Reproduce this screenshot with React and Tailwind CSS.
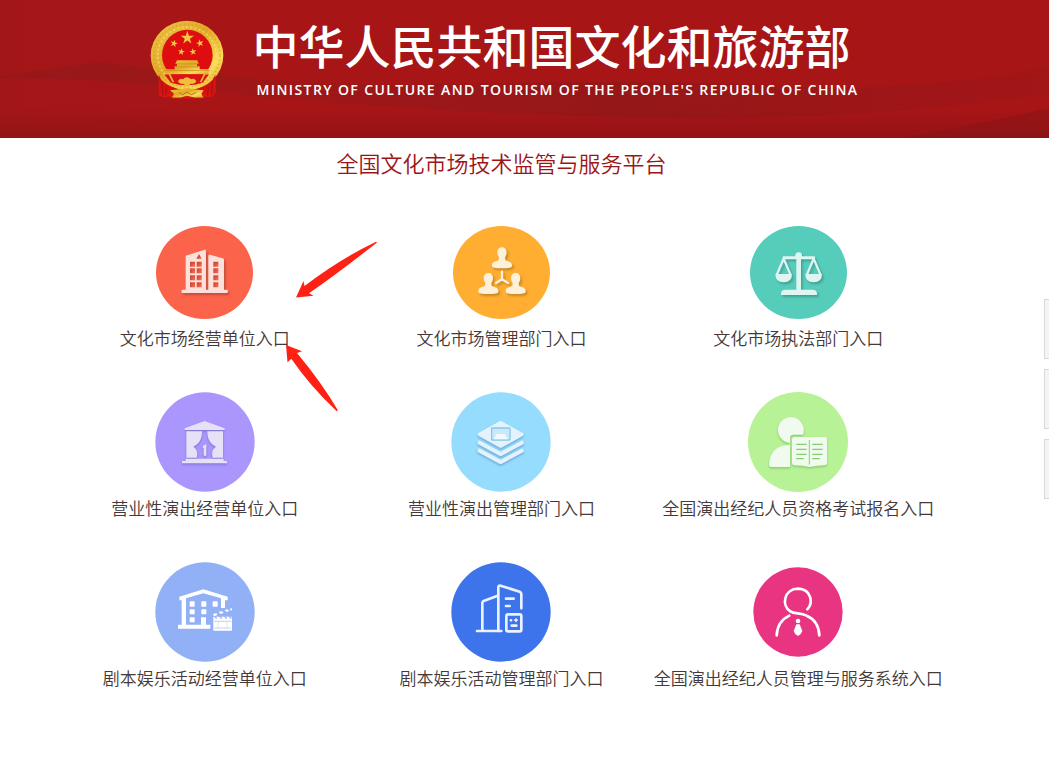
import React from "react";

const shadow = "[filter:drop-shadow(5px_6px_3px_rgba(0,0,0,0.22))]";
const softShadow = "[filter:drop-shadow(0px_4px_3px_rgba(30,60,120,0.35))]";

function Star({ cx, cy, r, turn = 0 }) {
  const points = Array.from({ length: 10 }, (_, i) => {
    const a = ((i * 36 - 90 + turn) * Math.PI) / 180;
    const d = i % 2 ? r * 0.38 : r;
    return `${(cx + d * Math.cos(a)).toFixed(1)},${(cy + d * Math.sin(a)).toFixed(1)}`;
  }).join(" ");
  return <polygon points={points} fill="#f6c544" />;
}

function Emblem() {
  return (
    <svg viewBox="58 43 222 236" className="h-[79px] w-[74px] shrink-0" aria-hidden="true">
      <defs>
        <linearGradient id="gold" x1="0" y1="0" x2="1" y2="1">
          <stop offset="0" stopColor="#edc64a" />
          <stop offset="0.45" stopColor="#e2a925" />
          <stop offset="0.75" stopColor="#fadb58" />
          <stop offset="1" stopColor="#e0a028" />
        </linearGradient>
      </defs>
      <path d="M86 200 L84 268 L100 276 L114 272 L126 278 H214 L226 272 L242 274 L256 258 L254 200 Z" fill="#dc1512" />
      <ellipse cx="169" cy="149" rx="109" ry="104" fill="url(#gold)" />
      <ellipse cx="169" cy="149" rx="99" ry="94" fill="none" stroke="#c58d1c" strokeWidth="5" strokeDasharray="5 7" opacity="0.4" />
      <ellipse cx="169" cy="149" rx="88" ry="85" fill="none" stroke="#fae47c" strokeWidth="5" strokeDasharray="7 6" opacity="0.6" />
      <ellipse cx="170" cy="148" rx="76" ry="76" fill="#de0e10" />
      <Star cx={170} cy={96} r={21} />
      <Star cx={130} cy={113} r={12} turn={15} />
      <Star cx={208} cy={112} r={12} turn={-15} />
      <Star cx={152} cy={138} r={11} turn={10} />
      <Star cx={187} cy={138} r={11} turn={-10} />
      <path d="M139 163 H200 L204 174 H199 V181 H207 V190 H237 L232 205 H106 L102 190 H132 V181 H139 V174 H134 Z" fill="url(#gold)" />
      <path d="M134 174 H204 M132 183 H207 M104 194 H236" stroke="#c78a18" strokeWidth="2" />
      <path d="M101 206 H235 L216 231 Q170 246 121 231 Z" fill="#d91512" />
      <path d="M116 205 L128 229 M222 205 L210 229" stroke="#eeb932" strokeWidth="5" />
      <path d="M142 226 Q148 216 157 220 Q168 209 181 220 Q191 216 197 226 Q193 236 181 234 Q169 243 157 234 Q146 236 142 226 Z" fill="#efbd38" />
      <path d="M84 206 Q96 240 128 244 L142 252 L134 262 Q110 262 84 262 Z M254 206 Q240 240 212 244 L198 252 L206 262 Q230 262 255 260 Z" fill="#d41212" />
      <path d="M93 226 L97 270 M106 242 V270 M245 226 L243 268 M233 242 L231 270" stroke="#a70e10" strokeWidth="3" fill="none" />
      <path d="M118 253 L150 250 L169 246 L189 250 L219 253 L212 264 L218 275 H192 L169 270 L149 275 H124 L130 264 Z" fill="url(#gold)" />
      <path d="M144 260 L156 267 L169 259 L182 267 L196 260" fill="none" stroke="#b37a17" strokeWidth="3" />
    </svg>
  );
}

function OfficeIcon() {
  return (
    <svg viewBox="48 43 291 279" className="h-[93px] w-[97px]" aria-hidden="true">
      <ellipse cx="193.500" cy="182.500" rx="145.500" ry="139.500" fill="#fb634a" />
      <g className={shadow} fill="#fde0da">
        <path fillRule="evenodd" d="M137 132 L194 114 Q198 114 198 118 V234 H205 V132 Q206 128 210 129 L248 140 Q252 141 252 145 V234 H260 Q264 234 264 239 Q264 244 260 244 H128 Q124 244 124 239 Q124 234 128 234 H137 Z M177 127 L169 141 H185 Z M150 150 h15 v15 h-15 Z M170 150 h15 v15 h-15 Z M150 170 h15 v15 h-15 Z M170 170 h15 v15 h-15 Z M150 191 h15 v15 h-15 Z M170 191 h15 v15 h-15 Z M150 212 h15 v15 h-15 Z M170 212 h15 v15 h-15 Z M220 150 h15 v15 h-15 Z M220 170 h15 v15 h-15 Z M220 191 h15 v15 h-15 Z M220 212 h15 v15 h-15 Z" />
      </g>
    </svg>
  );
}

function Bust({ x, y }) {
  return (
    <path
      transform={`translate(${x} ${y})`}
      d="M0 0 C9 0 14 6 14 15 C14 22 12 26 9 30 L10 38 C16 43 30 42 30 54 V57 Q30 63 0 63 Q-30 63 -30 57 V54 C-30 42 -16 43 -10 38 L-9 30 C-12 26 -14 22 -14 15 C-14 6 -9 0 0 0 Z"
    />
  );
}

function TeamIcon() {
  return (
    <svg viewBox="39 29 291 279" className="h-[93px] w-[97px]" aria-hidden="true">
      <ellipse cx="184.500" cy="168.500" rx="145.500" ry="139.500" fill="#ffae31" />
      <g className={shadow} fill="#fff0d9">
        <Bust x={186} y={93} />
        <Bust x={145} y={170} />
        <Bust x={227} y={170} />
        <path d="M186 166 V189 M186 189 L168 200 M186 189 L204 200" fill="none" stroke="#fff0d9" strokeWidth="7" strokeLinecap="round" />
      </g>
    </svg>
  );
}

function ScalesIcon() {
  return (
    <svg viewBox="27 29 291 279" className="h-[93px] w-[97px]" aria-hidden="true">
      <ellipse cx="172.500" cy="168.500" rx="145.500" ry="139.500" fill="#56cdbb" />
      <g className={shadow} fill="#def5f1">
        <circle cx="173" cy="118" r="10" />
        <rect x="166" y="118" width="14" height="106" />
        <rect x="125" y="120" width="97" height="9" rx="2" />
        <path d="M120 236 V230 Q121 220 135 220 H213 Q227 220 228 230 V236 Z" />
        <path d="M128 127 L108 174 M128 127 L148 174 M218 127 L198 174 M218 127 L238 174" stroke="#def5f1" strokeWidth="7" fill="none" />
        <path d="M103 173 H153 Q153 198 128 198 Q103 198 103 173 Z M193 173 H243 Q243 198 218 198 Q193 198 193 173 Z" />
      </g>
    </svg>
  );
}

function StageIcon() {
  return (
    <svg viewBox="30 21 300 300" className="size-[100px]" aria-hidden="true">
      <circle cx="180" cy="171" r="149" fill="#ab96fe" />
      <g className={softShadow} fill="#e7e1f8">
        <path d="M119 135 V130 L179 108 L239 130 V135 Z" />
        <path d="M124 139 H171 C171 163 162 177 145 185 C155 192 159 202 155 218 H124 Z" />
        <path d="M234 139 H187 C187 163 196 177 213 185 C203 192 199 202 203 218 H234 Z" />
        <path d="M122 221 H236 V228 H246 V235 H111 V228 H122 Z" />
        <path d="M174 183 Q178 177 184 179 V209 Q184 213 180 213 Q176 213 176 209 V188 L173 190 Z" />
      </g>
    </svg>
  );
}

function LayersIcon() {
  return (
    <svg viewBox="37 21 300 300" className="size-[100px]" aria-hidden="true">
      <circle cx="187" cy="171" r="149" fill="#95dcff" />
      <g className={softShadow} fill="#e2f3fd">
        <path d="M182 109 Q186 107 190 109 L252 143 Q259 148 252 153 L191 187 Q186 190 181 187 L120 153 Q113 148 120 143 Z" />
        <path d="M117 168 Q120 165 125 167 L186 200 L248 167 Q253 165 255 169 V177 L190 212 Q186 214 182 212 L117 177 Z" />
        <path d="M117 192 Q120 189 125 191 L186 224 L248 191 Q253 189 255 193 V201 L190 236 Q186 238 182 236 L117 201 Z" />
      </g>
      <rect x="159" y="129" width="55" height="36" rx="2" fill="#cbe8f9" stroke="#86c6ec" strokeWidth="4" />
      <path d="M172 151 Q173 147 178 147 H195 Q200 147 200 151 L208 163 H165 Z" fill="#f2fafe" />
    </svg>
  );
}

function ExamIcon() {
  return (
    <svg viewBox="24 21 300 300" className="size-[100px]" aria-hidden="true">
      <circle cx="174" cy="171" r="150" fill="#b8f297" />
      <g className="[filter:drop-shadow(0px_4px_3px_rgba(50,140,40,0.4))]" fill="#f0faee">
        <path d="M150 174 A39 39 0 1 1 189 149 H160 Q151 149 150 158 Z" />
        <path d="M150 179 V246 H94 Q87 246 87 237 Q91 180 150 179 Z" />
        <path d="M162 156 H255 Q261 157 261 163 V234 Q261 240 255 241 Q229 241 209 246 Q188 241 162 241 Q156 240 156 234 V163 Q156 157 162 156 Z" />
      </g>
      <path d="M208 165 V239" stroke="#8bd771" strokeWidth="3" />
      <path d="M169 178 H200 M169 193 H200 M169 208 H200 M169 221 H191 M217 178 H248 M217 193 H248 M217 208 H248 M217 221 H239" stroke="#84cf72" strokeWidth="4" />
    </svg>
  );
}

function ScriptVenueIcon() {
  return (
    <svg viewBox="30 21 300 300" className="size-[100px]" aria-hidden="true">
      <circle cx="180" cy="171" r="149" fill="#92b0f5" />
      <path d="M103 125 L175 103 L248 125 V136 H240 V159 H228 V130 L175 115 L123 130 V209 H168 V187 H183 V209 H196 V221 H99 V209 H110 V136 H103 Z" fill="#fff" />
      <g fill="#fff">
        <rect x="134" y="139" width="15" height="16" rx="2" />
        <rect x="169" y="139" width="15" height="16" rx="2" />
        <rect x="203" y="139" width="15" height="16" rx="2" />
        <rect x="134" y="163" width="15" height="15" rx="2" />
        <rect x="169" y="163" width="15" height="15" rx="2" />
        <rect x="134" y="187" width="15" height="15" rx="2" />
        <rect x="205" y="185" width="56" height="42" rx="2" />
        <path d="M204 177 L214 174 L217 180 L207 184 Z M221 171 L230 168 L236 174 L226 177 Z M239 165 L247 163 L253 168 L244 171 Z M255 161 L260 159 L261 165 L257 167 Z" />
      </g>
      <path d="M209 184 L215 191 M224 184 L230 191 M239 184 L245 191 M253 184 L259 191" stroke="#92b0f5" strokeWidth="4" />
      <path d="M207 199 H259 M208 219 H258" stroke="#9db8f4" strokeWidth="2" />
      <path d="M219 199 V219 M246 199 V219" stroke="#d0ddfa" strokeWidth="2" />
    </svg>
  );
}

function ScriptOfficeIcon() {
  return (
    <svg viewBox="37 21 300 300" className="size-[100px]" aria-hidden="true">
      <circle cx="187" cy="171" r="149" fill="#3d74eb" />
      <g fill="none" stroke="#ebf1fd" strokeWidth="8" strokeLinecap="round" strokeLinejoin="round">
        <path d="M115 228 H188 M131 228 V144 Q131 140 135 138 L177 122" />
        <path d="M179 228 V97 Q179 90 186 92 L243 110 Q248 112 248 117 V160" />
        <path d="M202 131 H225 M202 153 H213" />
        <rect x="203" y="178" width="45" height="51" rx="5" />
        <path d="M219 212 H233" />
      </g>
      <circle cx="217" cy="196" r="4" fill="#ebf1fd" />
      <path d="M232 188 L235 193 L240 195 L235 198 L232 203 L229 198 L224 195 L229 193 Z" fill="#ebf1fd" />
    </svg>
  );
}

function AgentIcon() {
  return (
    <svg viewBox="39 36 270 270" className="size-[90px]" aria-hidden="true">
      <circle cx="174" cy="171" r="134" fill="#e93482" />
      <g fill="none" stroke="#fff" strokeWidth="8" strokeLinecap="round">
        <path d="M110 241 Q112 199 148 182" />
        <path d="M202 163 C220 145 215 102 174 101 C132 102 123 151 151 169 C164 178 181 172 200 182 Q236 197 238 241" />
      </g>
      <circle cx="174" cy="198" r="7" fill="#fff" />
      <path d="M169 208 H179 L187 228 Q184 239 174 243 Q164 239 161 228 Z" fill="#fff" />
    </svg>
  );
}

function Arrows() {
  return (
    <svg viewBox="57 222 340 200" className="pointer-events-none absolute top-0 left-0 h-[200px] w-[340px] max-w-none" aria-hidden="true">
      <g fill="#ff2114">
        <path d="M296 297.500 L303.500 281 L304.500 286 Q340 259 376 241.700 L377 242.500 Q341 271 309 293.300 L313.500 295.800 Z" />
        <path d="M286 345 L302 351.300 L297 353 Q322 383 338 410.500 L336.500 411 Q310 386 291.300 358.700 L287.500 362.300 Z" />
      </g>
    </svg>
  );
}

const entries = [
  { label: "文化市场经营单位入口", Icon: OfficeIcon, marked: true },
  { label: "文化市场管理部门入口", Icon: TeamIcon },
  { label: "文化市场执法部门入口", Icon: ScalesIcon },
  { label: "营业性演出经营单位入口", Icon: StageIcon },
  { label: "营业性演出管理部门入口", Icon: LayersIcon },
  { label: "全国演出经纪人员资格考试报名入口", Icon: ExamIcon },
  { label: "剧本娱乐活动经营单位入口", Icon: ScriptVenueIcon },
  { label: "剧本娱乐活动管理部门入口", Icon: ScriptOfficeIcon },
  { label: "全国演出经纪人员管理与服务系统入口", Icon: AgentIcon },
];

function Waves() {
  return (
    <svg viewBox="0 0 1049 138" preserveAspectRatio="none" className="absolute inset-0 h-full w-full" aria-hidden="true">
      <defs>
        <linearGradient id="base" x1="0" y1="0" x2="1" y2="0">
          <stop offset="0" stopColor="#a31618" />
          <stop offset="0.2" stopColor="#a81517" />
          <stop offset="1" stopColor="#a81517" />
        </linearGradient>
        <linearGradient id="fold" x1="0" y1="0" x2="1" y2="0">
          <stop offset="0" stopColor="#951819" stopOpacity="0.9" />
          <stop offset="0.25" stopColor="#9b1719" stopOpacity="0.7" />
          <stop offset="0.6" stopColor="#961718" />
          <stop offset="1" stopColor="#a31517" />
        </linearGradient>
        <linearGradient id="floor" x1="0" y1="0" x2="0" y2="1">
          <stop offset="0" stopColor="#8c1214" stopOpacity="0" />
          <stop offset="1" stopColor="#861214" stopOpacity="0.6" />
        </linearGradient>
      </defs>
      <rect width="1049" height="138" fill="url(#base)" />
      <path d="M0 76 Q55 68 100 62 Q240 82 400 85 Q660 78 830 88 Q960 86 1049 66 V94 Q860 122 640 118 Q420 112 250 96 Q120 78 0 78 Z" fill="url(#fold)" />
      <path d="M900 138 Q980 124 1049 108 V138 Z" fill="#8d1416" opacity="0.6" />
      <rect y="108" width="1049" height="30" fill="url(#floor)" />
    </svg>
  );
}

export default function App() {
  return (
    <div className="min-h-screen bg-white font-['Noto_Sans_CJK_SC',sans-serif]">
      <header className="relative bg-[#a81517]">
        <Waves />
        <div className="relative flex h-[138px] items-start justify-center gap-7 pt-5 pr-10 text-white">
          <Emblem />
          <div>
            <h1 className="text-[46px] leading-[48px] font-medium whitespace-nowrap">中华人民共和国文化和旅游部</h1>
            <p className="mt-2 pl-1 font-['Open_Sans',sans-serif] text-sm leading-7 font-semibold tracking-widest whitespace-nowrap">
              MINISTRY OF CULTURE AND TOURISM OF THE PEOPLE'S REPUBLIC OF CHINA
            </p>
          </div>
        </div>
      </header>

      <main className="pt-2 pr-[46px] pb-10">
        <h2 className="text-center text-[22px] leading-8 font-[350] text-[#9c1518]">全国文化市场技术监管与服务平台</h2>
        <ul className="mx-auto mt-11 grid max-w-[890px] grid-cols-3 gap-y-[42px]">
          {entries.map(({ label, Icon, marked }) => (
            <li key={label} className="relative">
              <a href="#" className="flex flex-col items-center text-[#443838]">
                <span className="flex h-[100px] items-center">
                  <Icon />
                </span>
                <span className="mt-1 text-[17px] leading-6 font-[350] whitespace-nowrap">{label}</span>
              </a>
              {marked && <Arrows />}
            </li>
          ))}
        </ul>
      </main>

      <aside className="fixed top-[299px] right-0 flex flex-col gap-[10px]">
        {["工具一", "工具二", "工具三"].map((name) => (
          <button key={name} type="button" aria-label={name} className="h-[60px] w-[5px] border border-r-0 border-[#d9d9d9] bg-[#f4f4f4]" />
        ))}
      </aside>
    </div>
  );
}
